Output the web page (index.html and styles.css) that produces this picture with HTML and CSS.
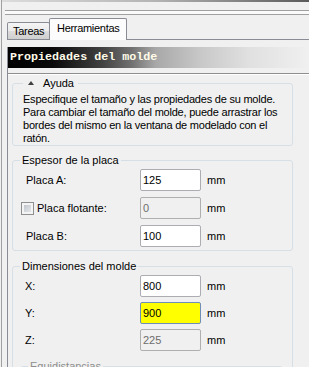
FILE: index.html
```html
<!DOCTYPE html>
<html lang="es">
  <head>
    <meta charset="UTF-8" />
    <meta name="viewport" content="width=device-width, initial-scale=1.0" />
    <title>Propiedades del molde</title>
    <link rel="stylesheet" href="styles.css">
  </head>
  <body>
    <div class="window">
      <div class="topline"></div>
      <div class="grip"><div class="grip-lines"></div></div>

      <div class="tabs">
        <div class="tab">Tareas</div>
        <div class="tab active">Herramientas</div>
      </div>

      <div class="panel">
        <div class="header">Propiedades del molde</div>
        <div class="sep"></div>

        <div class="content">
          <fieldset class="group help">
            <legend><span class="arrow"></span>Ayuda</legend>
            <p>
              Especifique el tamaño y las propiedades de su molde.<br />
              Para cambiar el tamaño del molde, puede arrastrar los<br />
              bordes del mismo en la ventana de modelado con el<br />
              ratón.
            </p>
          </fieldset>

          <fieldset class="group plate">
            <legend>Espesor de la placa</legend>
            <div class="rows">
              <div class="row">
                <label class="label">Placa A:</label>
                <input class="field" type="text" value="125" />
                <span class="unit">mm</span>
              </div>
              <div class="row">
                <label class="label check-label"><span class="checkbox"></span>Placa flotante:</label>
                <input class="field" type="text" value="0" disabled />
                <span class="unit">mm</span>
              </div>
              <div class="row">
                <label class="label">Placa B:</label>
                <input class="field" type="text" value="100" />
                <span class="unit">mm</span>
              </div>
            </div>
          </fieldset>

          <fieldset class="group dims">
            <legend>Dimensiones del molde</legend>
            <div class="rows">
              <div class="row">
                <label class="label">X:</label>
                <input class="field" type="text" value="800" />
                <span class="unit">mm</span>
              </div>
              <div class="row">
                <label class="label">Y:</label>
                <input class="field focused" type="text" value="900" />
                <span class="unit">mm</span>
              </div>
              <div class="row">
                <label class="label">Z:</label>
                <input class="field" type="text" value="225" disabled />
                <span class="unit">mm</span>
              </div>
            </div>

            <fieldset class="group equi">
              <legend>Equidistancias</legend>
              <div class="spacer"></div>
            </fieldset>
          </fieldset>
        </div>
      </div>
    </div>
  </body>
</html>
```

FILE: styles.css
```css
body {
  margin: 0;
  font-family: "Liberation Sans", Arial, sans-serif;
  font-size: 11px;
  color: #000;
  background-color: #f0f0f0;
  overflow: hidden;
}
.window {
  height: 367px;
  margin-left: 1px;
  border-left: 1px solid #a0a0a0;
  overflow: hidden;
}
.topline {
  height: 2px;
  background: linear-gradient(to right, #dcdcdc, #b4b4b4 50%, #5a5a5a);
}
.grip {
  height: 8px;
  padding-top: 8px;
}
.grip-lines {
  margin-left: 3px;
  height: 3px;
  background-color: #fafafa;
  border-top: 1px solid #a0a0a0;
  border-bottom: 1px solid #a0a0a0;
}
.tabs {
  display: flex;
  align-items: flex-end;
  height: 21px;
  margin-left: 5px;
  border-bottom: 1px solid #898c95;
  letter-spacing: -0.3px;
}
.tab {
  height: 16px;
  line-height: 16px;
  padding: 0 5px;
  border: 1px solid #898c95;
  border-bottom: none;
  border-radius: 2px 2px 0 0;
  background: linear-gradient(#f4f4f4, #ebebeb 50%, #dcdcdc 51%, #cfcfcf);
  width: 31px;
}
.tab.active {
  width: 62px;
  height: 18px;
  line-height: 18px;
  padding: 0 7px 3px 7px;
  margin-left: -1px;
  margin-bottom: -1px;
  background: #fcfcfc;
}
.panel {
  margin-left: 5px;
  border-left: 1px solid #898c95;
  height: 330px;
}
.header {
  margin-top: 7px;
  height: 21px;
  line-height: 21px;
  padding-left: 2px;
  font-family: "Liberation Mono", "Courier New", monospace;
  font-size: 11.7px;
  font-weight: bold;
  color: #fffbe8;
  background: linear-gradient(to right, #000 0%, #0a0a0a 15%, #404040 31%, #707070 41%, #a8a8a8 49%, #c8c8c8 64%, #e0e0e0 80%, #f0f0f0 100%);
  white-space: nowrap;
}
.sep {
  margin-top: 5px;
  border-top: 1px solid #8e8e8e;
  border-bottom: 1px solid #fff;
}
.content {
  padding: 0 16px 0 4px;
}
.group {
  margin: 0;
  padding: 0 9px 0 7px;
  border: 1px solid #d5dfe5;
  border-radius: 3px;
  min-width: 0;
}
.group legend {
  padding: 0 2px;
  line-height: 13px;
}
.help {
  margin-top: 2px;
  padding-top: 3px;
}
.help legend {
  margin-left: 3px;
  padding: 0 4px 0 5px;
}
.arrow {
  display: inline-block;
  width: 0;
  height: 0;
  margin: 0 9px 0 0;
  vertical-align: 2px;
  border-left: 3px solid transparent;
  border-right: 3px solid transparent;
  border-bottom: 4px solid #404040;
}
.help p {
  margin: 0;
  padding-left: 3px;
  line-height: 13px;
  letter-spacing: -0.22px;
  white-space: nowrap;
}
.plate {
  margin-top: 8px;
  padding-top: 2px;
  padding-bottom: 3px;
}
.dims {
  margin-top: 9px;
  padding-top: 2px;
}
.rows {
  display: flex;
  flex-direction: column;
  gap: 6px;
}
.dims .rows {
  gap: 5px;
}
.row {
  display: grid;
  grid-template-columns: 120px 61px auto;
  align-items: center;
  height: 22px;
}
.label {
  padding-left: 6px;
}
.dims .label {
  padding-left: 5px;
}
.check-label {
  display: flex;
  align-items: center;
  padding-left: 1px;
}
.checkbox {
  width: 11px;
  height: 11px;
  margin-right: 3px;
  border: 1px solid #8e8f8f;
  background: linear-gradient(135deg, #b9bdc3, #eef0f2);
  box-shadow: inset 0 0 0 2px #f4f4f4;
}
.unit {
  padding-left: 6px;
}
.field {
  box-sizing: border-box;
  width: 61px;
  height: 22px;
  margin: 0;
  padding: 0 2px;
  font-family: "Liberation Sans", Arial, sans-serif;
  font-size: 11px;
  color: #000;
  background-color: #fff;
  border: 1px solid #abadb3;
  border-radius: 2px;
  outline: none;
}
.field:disabled {
  color: #6d6d6d;
  background-color: #f0f0f0;
  border-color: #afafaf;
}
.field.focused {
  background-color: #ffff00;
  border-color: #6f8fb8;
}
.equi {
  margin: 9px 0 0 0;
  color: #8d8d8d;
}
.spacer {
  height: 20px;
}
```
